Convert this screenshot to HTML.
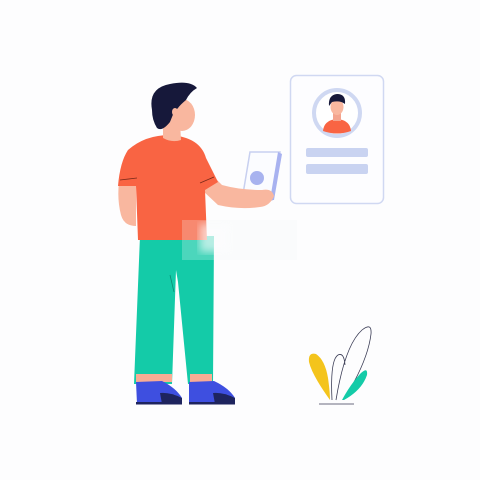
<!DOCTYPE html>
<html><head><style>html,body{margin:0;padding:0;background:#fff;width:480px;height:480px;overflow:hidden}</style></head>
<body>
<svg width="480" height="480" viewBox="0 0 480 480" xmlns="http://www.w3.org/2000/svg">
<defs><filter id="b"><feGaussianBlur stdDeviation="4"/></filter></defs>
<rect width="480" height="480" fill="#fdfdfe"/>
<!-- card -->
<rect x="290.5" y="75.5" width="93" height="128" rx="6" fill="#fdfdff" stroke="#d0d8f2" stroke-width="1.5"/>
<circle cx="337" cy="113" r="23" fill="#fff" stroke="#cfd8f2" stroke-width="4"/>
<path d="M323 131 Q324 120 337 119 Q350 120 351 131 Q337 136 323 131Z" fill="#f96443"/>
<rect x="333" y="113" width="8" height="8" fill="#f4a48e"/>
<ellipse cx="337" cy="107" rx="6.5" ry="8" fill="#f9b79f"/>
<path d="M329 106 Q328 95 337 94 Q346 94 345 104 Q340 100 332 102 Z" fill="#16183a"/>
<rect x="306" y="148" width="62" height="9" rx="2" fill="#c9d3f1"/>
<rect x="306" y="164" width="62" height="10" rx="2" fill="#c9d3f1"/>
<!-- plant -->
<path d="M330 400 Q312 375 309 362 Q308 352 316 354 Q325 360 328 378 Q330 392 330 400Z" fill="#f4c41c"/>
<path d="M332 400 Q330 360 338 355 Q344 352 345 365 M336 400 Q345 345 362 330 Q372 322 371 334 Q368 360 345 398" fill="none" stroke="#3a3c55" stroke-width="0.8"/>
<path d="M342 400 Q350 385 360 374 Q368 366 367 375 Q362 390 344 400Z" fill="#14cba8"/>
<line x1="319" y1="404" x2="354" y2="404" stroke="#6a6c80" stroke-width="1"/>
<!-- tablet -->
<path d="M250 152 L280 152 L272 200 L242 200 Z" fill="#fbfcff" stroke="#c8d0f0" stroke-width="1.5"/>
<path d="M278 152 L282 154 L274 200 L270 200Z" fill="#a8b2f0"/>
<circle cx="257" cy="178" r="7" fill="#a8b3ef"/>
<!-- legs -->
<path d="M140 236 L214 236 L213 384 L188 384 L178 282 L176 270 L172 384 L134 384 Z" fill="#14cba8"/>
<line x1="170" y1="275" x2="174" y2="292" stroke="#0b8d75" stroke-width="0.8"/>
<rect x="136" y="374" width="36" height="8" fill="#f8ac94"/>
<rect x="190" y="374" width="22" height="8" fill="#f8ac94"/>
<path d="M136 382 L162 381 Q176 388 182 398 L182 404 L137 404 Z" fill="#3e4fe0"/>
<path d="M160 393 Q170 392 182 398 L182 404 L162 404 Z" fill="#1e245e"/>
<path d="M189 382 L214 381 Q229 388 235 398 L235 404 L189 404 Z" fill="#3e4fe0"/>
<path d="M213 393 Q223 392 235 398 L235 404 L215 404 Z" fill="#1e245e"/>
<rect x="136" y="402" width="46" height="2.5" fill="#1e245e"/>
<rect x="189" y="402" width="46" height="2.5" fill="#1e245e"/>
<!-- back arm -->
<path d="M119 182 L136 182 L136 226 Q124 226 121 215 Q117 200 119 182Z" fill="#f9b79f"/>
<!-- front arm -->
<path d="M205 168 L222 185 Q240 190 262 190 Q272 188 274 196 Q270 206 260 207 Q240 210 218 205 L202 190Z" fill="#f9b79f"/>
<!-- shirt -->
<path d="M128 150 Q145 135 170 135 Q200 137 206 158 L218 182 L205 190 L207 240 L138 240 L136 186 L118 186 Q120 162 128 150Z" fill="#f96443"/>
<line x1="120" y1="180" x2="137" y2="178" stroke="#7a2a1a" stroke-width="0.8"/>
<line x1="200" y1="183" x2="214" y2="177" stroke="#7a2a1a" stroke-width="0.8"/>
<!-- neck/head -->
<path d="M163 122 L180 122 L181 140 Q172 143 163 138Z" fill="#f9b79f"/>
<ellipse cx="182" cy="115" rx="13" ry="16" fill="#f9b79f"/>
<path d="M152 110 Q148 88 170 84 Q190 80 197 88 Q190 92 186 100 Q180 105 178 108 L174 112 L170 122 Q162 132 157 128 Q152 120 152 110Z" fill="#16183a"/>
<ellipse cx="175" cy="112" rx="3" ry="4" fill="#f9b79f"/>
<!-- blurred patch -->
<rect x="182" y="220" width="115" height="40" fill="#f4f7f6" opacity="0.25"/>
<rect x="200" y="224" width="30" height="28" fill="#fdfdfe" opacity="0.6" filter="url(#b)"/>
</svg>
</body></html>
